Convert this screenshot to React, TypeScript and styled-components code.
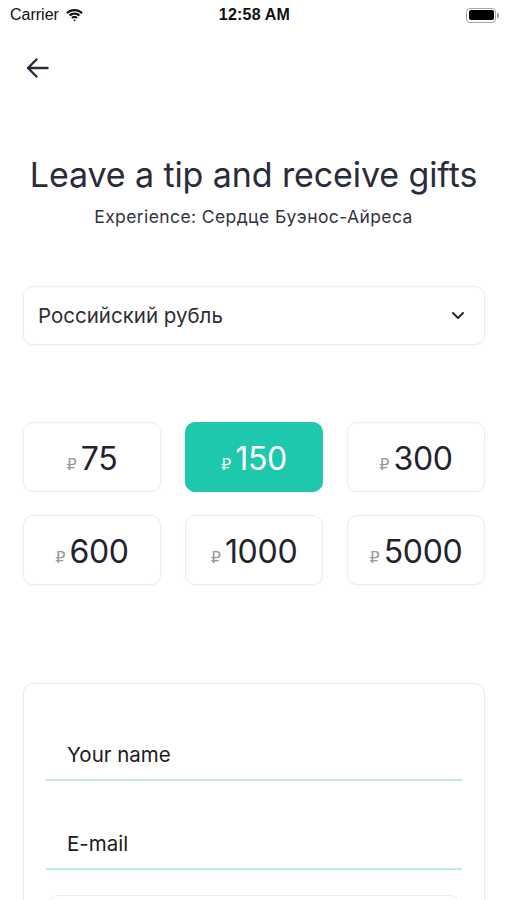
import React from "react";
import styled, { createGlobalStyle } from "styled-components";

const Global = createGlobalStyle`
  html, body { margin: 0; padding: 0; background: #ffffff; }
  body { font-family: Inter, "Noto Sans", sans-serif; color: #2b2b38; }
  * { box-sizing: border-box; }
`;

const Page = styled.div`
  width: 507px;
  height: 900px;
  overflow: hidden;
  background: #fff;
`;

const StatusBar = styled.div`
  height: 30px;
  display: grid;
  grid-template-columns: 1fr auto 1fr;
  align-items: center;
  padding: 0 8px 0 10px;
  font-family: "Liberation Sans", Arial, sans-serif;
  color: #111;
`;

const Carrier = styled.div`
  display: flex;
  align-items: center;
  gap: 6px;
  font-size: 16px;
`;

const Clock = styled.div`
  font-size: 16px;
  font-weight: 700;
  letter-spacing: 0.2px;
`;

const Battery = styled.div`
  justify-self: end;
  display: flex;
  align-items: center;
  gap: 1px;
`;

const BatteryBody = styled.div`
  width: 30px;
  height: 15px;
  border: 1.5px solid #a8a8a8;
  border-radius: 4px;
  padding: 1.5px;
  &::after {
    content: "";
    display: block;
    width: 100%;
    height: 100%;
    background: #000;
    border-radius: 2px;
  }
`;

const BatteryTip = styled.div`
  width: 2px;
  height: 5px;
  background: #a8a8a8;
  border-radius: 0 1px 1px 0;
`;

const Header = styled.div`
  height: 74px;
  padding: 27px 0 0 26px;
`;

const BackButton = styled.button`
  border: 0;
  background: none;
  padding: 0;
  width: 24px;
  height: 22px;
  display: flex;
  align-items: center;
  color: #2a2a3c;
`;

const Hero = styled.div`
  padding-top: 50px;
  text-align: center;
`;

const Title = styled.h1`
  margin: 0;
  font-size: 34px;
  font-weight: 400;
  line-height: 42px;
  color: #2b2b3a;
  letter-spacing: -0.1px;
`;

const Subtitle = styled.div`
  margin-top: 10px;
  font-size: 17.5px;
  line-height: 22px;
  color: #333340;
  letter-spacing: 0.4px;
`;

const Content = styled.div`
  padding: 0 22px 0 23px;
`;

const Card = styled.div`
  background: #fff;
  border: 1px solid #ececec;
  border-radius: 10px;
  box-shadow: 0 1px 3px rgba(0, 0, 0, 0.03);
`;

const Select = styled(Card)`
  margin-top: 58px;
  height: 59px;
  display: flex;
  align-items: center;
  justify-content: space-between;
  padding: 0 19px 0 14px;
  font-size: 20.5px;
  color: #2f2f36;
`;

const AmountGrid = styled.div`
  margin-top: 77px;
  display: grid;
  grid-template-columns: repeat(3, 138px);
  justify-content: space-between;
  row-gap: 23px;
`;

const Amount = styled.button<{ $active?: boolean }>`
  height: 70px;
  border-radius: 10px;
  border: 1px solid ${(p) => (p.$active ? "#1ec8ad" : "#ededed")};
  background: ${(p) => (p.$active ? "#1ec8ad" : "#fff")};
  box-shadow: 0 1px 3px rgba(0, 0, 0, 0.03);
  display: flex;
  align-items: baseline;
  justify-content: center;
  gap: 4px;
  padding: 0;
  padding-top: 2px;
  font-family: Inter, "Noto Sans", sans-serif;
  color: ${(p) => (p.$active ? "#ffffff" : "#23232f")};
  line-height: 68px;
`;

const Ruble = styled.span<{ $active?: boolean }>`
  font-family: "DejaVu Sans", Inter, sans-serif;
  font-size: 16px;
  color: ${(p) => (p.$active ? "#e8fbf7" : "#9a9a9a")};
`;

const Value = styled.span`
  font-size: 32px;
  font-weight: 400;
  letter-spacing: -0.3px;
`;

const Form = styled(Card)`
  margin-top: 98px;
  padding: 52px 22px 0 22px;
  height: 260px;
`;

const Field = styled.div`
  height: 89px;
  display: flex;
  align-items: flex-end;
  padding: 0 0 12px 21px;
  border-bottom: 2px solid #bdeee5;
  font-size: 20.5px;
  color: #1c1c22;
  &:first-child {
    height: 45px;
  }
`;

const SubBox = styled.div`
  margin: 25px 4px 0 3px;
  height: 60px;
  border: 1px solid #ececec;
  border-radius: 8px;
`;

const amounts = [75, 150, 300, 600, 1000, 5000];

export default function App() {
  return (
    <Page>
      <Global />
      <StatusBar>
        <Carrier>
          Carrier
          <svg width="19" height="14" viewBox="0 0 19 14">
            <path d="M9.5 3.2c2.6 0 5 1 6.8 2.7l1.5-1.6C15.6 2.2 12.7 1 9.5 1S3.4 2.2 1.2 4.3l1.5 1.6C4.5 4.2 6.9 3.2 9.5 3.2z" fill="#111" />
            <path d="M9.5 6.7c1.6 0 3 .6 4.2 1.6l1.5-1.6C13.7 5.3 11.7 4.5 9.5 4.5S5.3 5.3 3.8 6.7l1.5 1.6c1.2-1 2.6-1.6 4.2-1.6z" fill="#111" />
            <path d="M9.5 10.1c.7 0 1.3.3 1.8.7l1.5-1.6c-.9-.8-2-1.3-3.3-1.3s-2.4.5-3.3 1.3l1.5 1.6c.5-.4 1.1-.7 1.8-.7zM9.5 13.5l1.3-1.4c-.3-.3-.8-.5-1.3-.5s-1 .2-1.3.5z" fill="#111" />
          </svg>
        </Carrier>
        <Clock>12:58 AM</Clock>
        <Battery>
          <BatteryBody />
          <BatteryTip />
        </Battery>
      </StatusBar>
      <Header>
        <BackButton aria-label="Back">
          <svg width="23" height="20" viewBox="0 0 23 20" fill="none" stroke="currentColor" strokeWidth="2.4" strokeLinecap="round" strokeLinejoin="round">
            <path d="M21.5 10H2M10.5 1.5 2 10l8.5 8.5" />
          </svg>
        </BackButton>
      </Header>
      <Hero>
        <Title>Leave a tip and receive gifts</Title>
        <Subtitle>Experience: Сердце Буэнос-Айреса</Subtitle>
      </Hero>
      <Content>
        <Select>
          Российский рубль
          <svg width="14" height="9" viewBox="0 0 14 9" fill="none" stroke="#2a2a33" strokeWidth="2" strokeLinecap="round" strokeLinejoin="round">
            <path d="M2 2l5 5 5-5" />
          </svg>
        </Select>
        <AmountGrid>
          {amounts.map((a) => (
            <Amount key={a} $active={a === 150}>
              <Ruble $active={a === 150}>₽</Ruble>
              <Value>{a}</Value>
            </Amount>
          ))}
        </AmountGrid>
        <Form>
          <Field>Your name</Field>
          <Field>E-mail</Field>
          <SubBox />
        </Form>
      </Content>
    </Page>
  );
}
